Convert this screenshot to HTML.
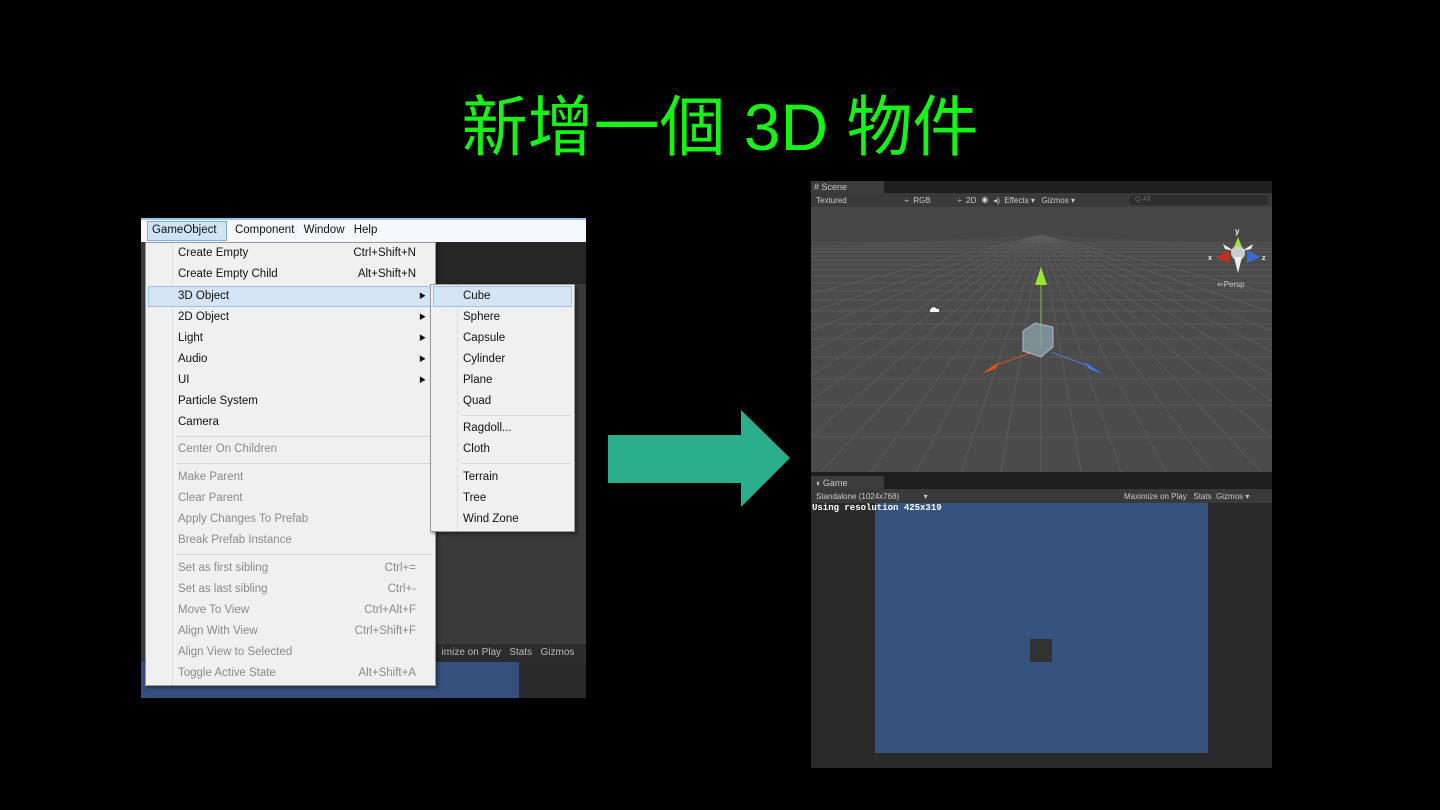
<!DOCTYPE html>
<html><head><meta charset="utf-8"><style>
*{margin:0;padding:0;box-sizing:border-box}
body{width:1440px;height:810px;background:#000;position:relative;overflow:hidden;font-family:"Liberation Sans","Noto Sans CJK TC",sans-serif}
.abs{position:absolute}
.title{left:0;width:1440px;top:84px;text-align:center;font-size:66px;color:#17f217;font-family:"Liberation Sans","Noto Sans CJK TC",sans-serif;line-height:86px}
.mi{position:absolute;left:32px;font-size:11.5px;color:#111;height:21px;line-height:21px;width:258px}
.mi.g{color:#8a8a8a}
.mi .k{position:absolute;right:20px;top:0}
.mi .ar{position:absolute;right:10px;top:0;font-size:7px}
.si{position:absolute;left:32px;font-size:11.5px;color:#111;height:21px;line-height:21px}
.ut{font-size:8px;color:#c8c8c8;position:absolute;line-height:13px}
</style></head><body>
<div class="abs title">新增一個 3D 物件</div>

<div class="abs" style="left:141px;top:218px;width:445px;height:480px;background:#3a3a3a;overflow:hidden">
  <div class="abs" style="left:0;top:0;width:445px;height:24px;background:#f6f8fb;border-top:2px solid #9fc3e8"></div>
  <div class="abs" style="left:6px;top:3px;width:80px;height:20px;background:#cfe3f7;border:1px solid #7fb1e0"></div>
  <div class="abs" style="left:11px;top:6px;font-size:11.5px;color:#111;word-spacing:6px">GameObject&nbsp;&nbsp;Component&nbsp;Window&nbsp;Help</div>
  <div class="abs" style="left:295px;top:24px;width:150px;height:42px;background:#262626"></div>
  <div class="abs" style="left:295px;top:426px;width:150px;height:18px;background:#2c2c2c;font-size:10px;color:#bbb;line-height:18px">&nbsp;&nbsp;imize on Play&nbsp;&nbsp; Stats&nbsp;&nbsp; Gizmos</div>
  <div class="abs" style="left:0;top:444px;width:378px;height:36px;background:#35507c"></div>
  <div class="abs" style="left:378px;top:444px;width:67px;height:36px;background:#2a2a2a"></div>
  <div class="abs" style="left:4px;top:24px;width:291px;height:444px;background:#f0f0f0;border:1px solid #999;box-shadow:2px 2px 3px rgba(0,0,0,.4)">
    <div class="abs" style="left:26px;top:0;width:1px;height:442px;background:#e0e0e0"></div>
    <div class="abs" style="left:2px;top:43px;width:285px;height:21px;background:#d4e4f5;border:1px solid #9cc0e6"></div>
    <div class="mi" style="top:0">Create Empty<span class="k">Ctrl+Shift+N</span></div>
    <div class="mi" style="top:21px">Create Empty Child<span class="k">Alt+Shift+N</span></div>
    <div class="mi" style="top:43px">3D Object<span class="ar">▶</span></div>
    <div class="mi" style="top:64px">2D Object<span class="ar">▶</span></div>
    <div class="mi" style="top:85px">Light<span class="ar">▶</span></div>
    <div class="mi" style="top:106px">Audio<span class="ar">▶</span></div>
    <div class="mi" style="top:127px">UI<span class="ar">▶</span></div>
    <div class="mi" style="top:148px">Particle System</div>
    <div class="mi" style="top:169px">Camera</div>
    <div class="abs" style="left:30px;top:193px;width:256px;height:1px;background:#d8d8d8"></div>
    <div class="mi g" style="top:196px">Center On Children</div>
    <div class="abs" style="left:30px;top:220px;width:256px;height:1px;background:#d8d8d8"></div>
    <div class="mi g" style="top:224px">Make Parent</div>
    <div class="mi g" style="top:245px">Clear Parent</div>
    <div class="mi g" style="top:266px">Apply Changes To Prefab</div>
    <div class="mi g" style="top:287px">Break Prefab Instance</div>
    <div class="abs" style="left:30px;top:311px;width:256px;height:1px;background:#d8d8d8"></div>
    <div class="mi g" style="top:315px">Set as first sibling<span class="k">Ctrl+=</span></div>
    <div class="mi g" style="top:336px">Set as last sibling<span class="k">Ctrl+-</span></div>
    <div class="mi g" style="top:357px">Move To View<span class="k">Ctrl+Alt+F</span></div>
    <div class="mi g" style="top:378px">Align With View<span class="k">Ctrl+Shift+F</span></div>
    <div class="mi g" style="top:399px">Align View to Selected</div>
    <div class="mi g" style="top:420px">Toggle Active State<span class="k">Alt+Shift+A</span></div>
  </div>
  <div class="abs" style="left:289px;top:66px;width:145px;height:248px;background:#f0f0f0;border:1px solid #999;box-shadow:2px 2px 3px rgba(0,0,0,.4)">
    <div class="abs" style="left:26px;top:0;width:1px;height:246px;background:#e0e0e0"></div>
    <div class="abs" style="left:2px;top:1px;width:139px;height:21px;background:#d4e4f5;border:1px solid #9cc0e6"></div>
    <div class="si" style="top:1px">Cube</div>
    <div class="si" style="top:22px">Sphere</div>
    <div class="si" style="top:43px">Capsule</div>
    <div class="si" style="top:64px">Cylinder</div>
    <div class="si" style="top:85px">Plane</div>
    <div class="si" style="top:106px">Quad</div>
    <div class="abs" style="left:30px;top:130px;width:110px;height:1px;background:#d8d8d8"></div>
    <div class="si" style="top:133px">Ragdoll...</div>
    <div class="si" style="top:154px">Cloth</div>
    <div class="abs" style="left:30px;top:178px;width:110px;height:1px;background:#d8d8d8"></div>
    <div class="si" style="top:182px">Terrain</div>
    <div class="si" style="top:203px">Tree</div>
    <div class="si" style="top:224px">Wind Zone</div>
  </div>
</div>

<svg class="abs" style="left:600px;top:405px" width="200" height="110"><polygon points="8,30 141,30 141,5 190,53 141,102 141,78 8,78" fill="#2aae8c"/></svg>

<div class="abs" style="left:811px;top:181px;width:461px;height:587px;background:#2a2a2a;overflow:hidden">
  <div class="abs" style="left:0;top:0;width:461px;height:12px;background:#1e1e1e"></div>
  <div class="abs" style="left:0;top:0;width:73px;height:12px;background:#3c3c3c"></div>
  <div class="ut" style="left:3px;top:0;font-size:9px;line-height:12px">#&nbsp;Scene</div>
  <div class="abs" style="left:0;top:12px;width:461px;height:14px;background:#3a3a3a"></div>
  <div class="ut" style="left:5px;top:13px">Textured&nbsp;&nbsp;&nbsp;&nbsp;&nbsp;&nbsp;&nbsp;&nbsp;&nbsp;&nbsp;&nbsp;&nbsp;&nbsp;&nbsp;&nbsp;&nbsp;&nbsp;&nbsp;&nbsp;&nbsp;&nbsp;&nbsp;&nbsp;&nbsp;&nbsp;&nbsp;÷&nbsp;&nbsp;RGB&nbsp;&nbsp;&nbsp;&nbsp;&nbsp;&nbsp;&nbsp;&nbsp;&nbsp;&nbsp;&nbsp;&nbsp;÷&nbsp;&nbsp;2D&nbsp;&nbsp;☀&nbsp;&nbsp;◂)&nbsp;&nbsp;Effects ▾&nbsp;&nbsp; Gizmos ▾</div>
  <div class="abs" style="left:318px;top:14px;width:140px;height:10px;border-radius:5px;background:#2e2e2e;font-size:7px;color:#666;padding-left:6px;line-height:10px">Q·All</div>
  <svg class="abs" style="left:0;top:26px" width="461" height="265">
    <rect width="461" height="265" fill="#474747"/>
    <polygon points="0,40 230,28 461,40 461,265 0,265" fill="#4b4b4b"/>
    <g stroke="#5d5d5d" stroke-width="0.8">
      <line x1="0" y1="36" x2="461" y2="36"/><line x1="0" y1="39" x2="461" y2="39"/><line x1="0" y1="42" x2="461" y2="42"/><line x1="0" y1="45" x2="461" y2="45"/><line x1="0" y1="49" x2="461" y2="49"/><line x1="0" y1="53" x2="461" y2="53"/><line x1="0" y1="58" x2="461" y2="58"/><line x1="0" y1="63" x2="461" y2="63"/><line x1="0" y1="69" x2="461" y2="69"/><line x1="0" y1="76" x2="461" y2="76"/><line x1="0" y1="84" x2="461" y2="84"/><line x1="0" y1="93" x2="461" y2="93"/><line x1="0" y1="104" x2="461" y2="104"/><line x1="0" y1="117" x2="461" y2="117"/><line x1="0" y1="132" x2="461" y2="132"/><line x1="0" y1="150" x2="461" y2="150"/><line x1="0" y1="172" x2="461" y2="172"/><line x1="0" y1="198" x2="461" y2="198"/><line x1="0" y1="230" x2="461" y2="230"/>
    </g>
    <g stroke="#5d5d5d" stroke-width="0.8">
      <line x1="230" y1="28" x2="230" y2="265"/>
      <line x1="230" y1="28" x2="190" y2="265"/><line x1="230" y1="28" x2="270" y2="265"/>
      <line x1="230" y1="28" x2="150" y2="265"/><line x1="230" y1="28" x2="310" y2="265"/>
      <line x1="230" y1="28" x2="105" y2="265"/><line x1="230" y1="28" x2="355" y2="265"/>
      <line x1="230" y1="28" x2="60" y2="265"/><line x1="230" y1="28" x2="400" y2="265"/>
      <line x1="230" y1="28" x2="10" y2="265"/><line x1="230" y1="28" x2="450" y2="265"/>
      <line x1="230" y1="28" x2="-40" y2="265"/><line x1="230" y1="28" x2="500" y2="265"/>
      <line x1="230" y1="28" x2="-100" y2="265"/><line x1="230" y1="28" x2="560" y2="265"/>
      <line x1="230" y1="28" x2="-160" y2="265"/><line x1="230" y1="28" x2="620" y2="265"/>
      <line x1="230" y1="28" x2="-240" y2="265"/><line x1="230" y1="28" x2="700" y2="265"/>
      <line x1="230" y1="28" x2="-340" y2="265"/><line x1="230" y1="28" x2="800" y2="265"/>
      <line x1="230" y1="28" x2="-480" y2="265"/><line x1="230" y1="28" x2="940" y2="265"/>
      <line x1="230" y1="28" x2="-700" y2="265"/><line x1="230" y1="28" x2="1160" y2="265"/>
    </g>
    <line x1="230" y1="140" x2="230" y2="60" stroke="#7ec83a"/>
    <polygon points="230,60 224,78 236,78" fill="#9be530"/>
    <line x1="222" y1="145" x2="180" y2="160" stroke="#d05030"/>
    <polygon points="170,167 188,155 184,162" fill="#e8501c"/>
    <line x1="240" y1="145" x2="280" y2="160" stroke="#4a7ad8"/>
    <polygon points="292,167 274,155 278,162" fill="#3a78f0"/>
    <polygon points="212,124 224,116 242,120 242,140 230,150 212,144" fill="#8aa0a8" opacity=".8" stroke="#cce" stroke-width="1"/>
    <path d="M119,103 q3,-5 7,-1 h2 v3 h-9z" fill="#fff"/>
    <g transform="translate(427,46)">
      <polygon points="0,-16 -5,-3 5,-3" fill="#9be530"/>
      <polygon points="-22,4 -9,-3 -9,10" fill="#c0301a"/>
      <polygon points="22,4 9,-3 9,10" fill="#3a6ad8"/>
      <circle r="7" fill="#ccc"/>
      <polygon points="-4,4 4,4 0,20" fill="#eee"/>
      <polygon points="-4,-2 -15,-9 -13,-4" fill="#eee"/><polygon points="4,-2 15,-9 13,-4" fill="#eee"/>
      <text x="-3" y="-19" font-size="8" fill="#eee" font-family="Liberation Sans" font-weight="bold">y</text>
      <text x="-30" y="7" font-size="7" fill="#eee" font-family="Liberation Sans" font-weight="bold">x</text>
      <text x="24" y="7" font-size="7" fill="#eee" font-family="Liberation Sans" font-weight="bold">z</text>
    </g>
    <text x="406" y="80" font-size="8" fill="#ccc" font-family="Liberation Sans">⇐Persp</text>
  </svg>
  <div class="abs" style="left:0;top:291px;width:461px;height:4px;background:#1e1e1e"></div>
  <div class="abs" style="left:0;top:295px;width:461px;height:13px;background:#1e1e1e"></div>
  <div class="abs" style="left:0;top:295px;width:73px;height:13px;background:#3c3c3c"></div>
  <div class="ut" style="left:4px;top:296px;font-size:9px">◖ Game</div>
  <div class="abs" style="left:0;top:308px;width:461px;height:14px;background:#3a3a3a"></div>
  <div class="ut" style="left:5px;top:309px">Standalone (1024x768)&nbsp;&nbsp;&nbsp;&nbsp;&nbsp;&nbsp;&nbsp;&nbsp;&nbsp;&nbsp;&nbsp;▾</div>
  <div class="ut" style="left:313px;top:309px">Maximize on Play&nbsp;&nbsp; Stats&nbsp; Gizmos ▾</div>
  <div class="abs" style="left:64px;top:322px;width:333px;height:250px;background:#36527f"></div>
  <div class="abs" style="left:219px;top:458px;width:22px;height:23px;background:#323232"></div>
  <div class="abs" style="left:1px;top:322px;font-size:9px;font-weight:bold;color:#fff;font-family:'Liberation Mono',monospace;line-height:11px">Using resolution 425x319</div>
</div>
</body></html>
